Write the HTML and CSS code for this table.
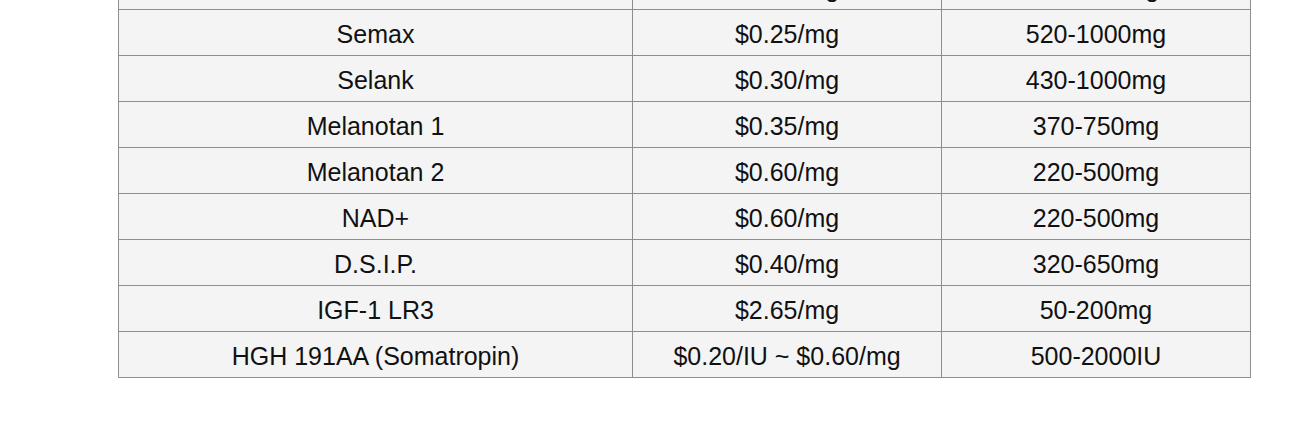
FILE: index.html
```html
<!DOCTYPE html>
<html>
<head>
<meta charset="utf-8">
<link rel="stylesheet" href="styles.css">
</head>
<body>
<table class="price-table">
  <colgroup>
    <col class="c-name">
    <col class="c-price">
    <col class="c-qty">
  </colgroup>
  <tbody>
    <tr><td></td><td>$0.50/mg</td><td>260-600mg</td></tr>
    <tr><td>Semax</td><td>$0.25/mg</td><td>520-1000mg</td></tr>
    <tr><td>Selank</td><td>$0.30/mg</td><td>430-1000mg</td></tr>
    <tr><td>Melanotan 1</td><td>$0.35/mg</td><td>370-750mg</td></tr>
    <tr><td>Melanotan 2</td><td>$0.60/mg</td><td>220-500mg</td></tr>
    <tr><td>NAD+</td><td>$0.60/mg</td><td>220-500mg</td></tr>
    <tr><td>D.S.I.P.</td><td>$0.40/mg</td><td>320-650mg</td></tr>
    <tr><td>IGF-1 LR3</td><td>$2.65/mg</td><td>50-200mg</td></tr>
    <tr><td>HGH 191AA (Somatropin)</td><td>$0.20/IU ~ $0.60/mg</td><td>500-2000IU</td></tr>
  </tbody>
</table>
</body>
</html>
```
FILE: styles.css
```css
html, body {
  margin: 0;
  padding: 0;
  background: #ffffff;
  height: 428px;
  overflow: hidden;
}
.price-table {
  margin-top: -37px;
  margin-left: 118px;
  width: 1132px;
  border-collapse: collapse;
  table-layout: fixed;
  background: #f4f4f4;
  font-family: "Liberation Sans", Arial, Helvetica, sans-serif;
  font-size: 25px;
  color: #111111;
}
.c-name { width: 514px; }
.c-price { width: 309px; }
.c-qty { width: 309px; }
.price-table td {
  border: 1px solid #8e8e8e;
  height: 43px;
  padding: 2px 0 0 0;
  text-align: center;
  vertical-align: middle;
  line-height: 28px;
}
```
